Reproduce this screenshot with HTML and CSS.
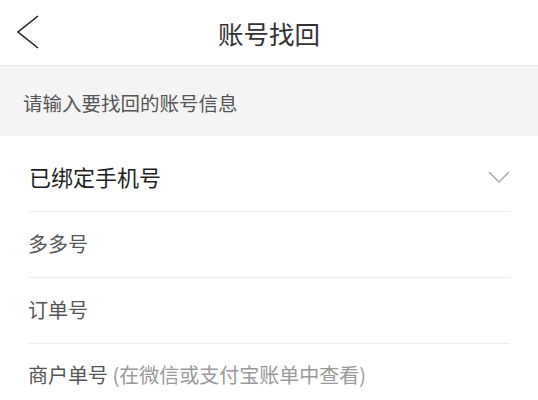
FILE: index.html
```html
<!DOCTYPE html>
<html lang="zh-CN">
<head>
<meta charset="utf-8">
<title>账号找回</title>
<link rel="stylesheet" href="styles.css">
</head>
<body>
<div class="page">
  <header class="topbar">
    <div class="back">
      <svg width="28" height="38" viewBox="0 0 28 38"><polyline points="24,3 4,19 24,35" fill="none" stroke="#222" stroke-width="1.6"/></svg>
    </div>
    <h1 class="title">账号找回</h1>
    <div class="spacer"></div>
  </header>
  <div class="hint-band">请输入要找回的账号信息</div>
  <div class="list">
    <div class="row row-main">
      <span>已绑定手机号</span>
      <svg class="chev" width="22" height="12" viewBox="0 0 22 12"><polyline points="1,1 11,11 21,1" fill="none" stroke="#a8a8a8" stroke-width="1.5"/></svg>
    </div>
    <div class="row">多多号</div>
    <div class="row">订单号</div>
    <div class="row row-last">商户单号 <span class="muted">(在微信或支付宝账单中查看)</span></div>
  </div>
</div>
</body>
</html>
```
FILE: styles.css
```css
* { box-sizing: border-box; }
html, body { margin: 0; padding: 0; background: #fff; }
body { font-family: "Noto Sans CJK SC", "Noto Sans", sans-serif; }
.page { width: 538px; height: 400px; overflow: hidden; }
.topbar {
  height: 66px;
  border-bottom: 1px solid #e6e6e6;
  display: grid;
  grid-template-columns: 70px 1fr 70px;
  align-items: center;
}
.back { padding-left: 14px; display: flex; align-items: center; height: 100%; }
.back svg { display: block; margin-top: -2px; }
.title {
  margin: 0;
  text-align: center;
  font-size: 25.5px;
  font-weight: 400;
  color: #333;
  line-height: 1;
}
.hint-band {
  height: 70px;
  background: #f4f4f4;
  padding-left: 23px;
  display: flex;
  align-items: center;
  font-size: 19.5px;
  color: #555;
  padding-top: 2px;
}
.list { padding: 10px 28px 0; }
.row {
  height: 66px;
  border-bottom: 1px solid #ededed;
  display: flex;
  align-items: center;
  font-size: 20px;
  color: #555;
  white-space: pre;
  padding-bottom: 3px;
}
.row-main {
  justify-content: space-between;
  font-size: 22px;
  color: #1e1e1e;
  padding-bottom: 6px;
}
.row-main span { margin-left: 1px; }
.chev { display: block; margin-top: 3px; }
.row-last { border-bottom: none; padding-bottom: 5px; }
.muted { color: #999; }
```
